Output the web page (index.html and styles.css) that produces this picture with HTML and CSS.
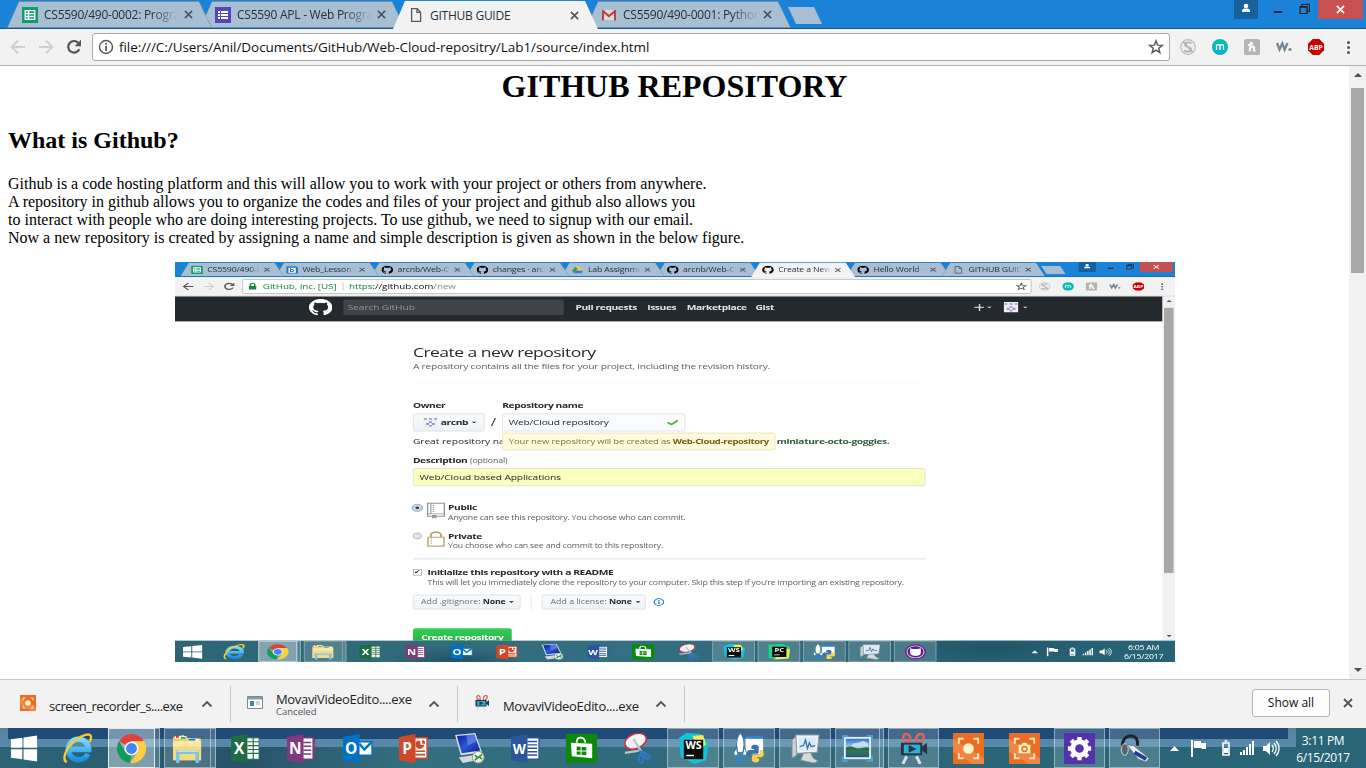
FILE: index.html
```
<!DOCTYPE html>
<html lang="en">
<head>
<meta charset="utf-8">
<title>GITHUB GUIDE</title>
<link rel="stylesheet" href="styles.css">
</head>
<body>
<svg class="sprite" aria-hidden="true">
  <linearGradient id="g-sky" x1="0" y1="0" x2="0" y2="1"><stop offset="0" stop-color="#2f74c8"/><stop offset=".5" stop-color="#a9d4f0"/><stop offset=".6" stop-color="#3d7d45"/><stop offset="1" stop-color="#1f5a86"/></linearGradient>
  <linearGradient id="g-screen" x1="0" y1="0" x2="1" y2="1"><stop offset="0" stop-color="#0b1f9a"/><stop offset=".5" stop-color="#2f56d8"/><stop offset="1" stop-color="#0a1a80"/></linearGradient>
  <linearGradient id="g-m" x1="0" y1="0" x2="0" y2="1"><stop offset="0" stop-color="#00c4a0"/><stop offset="1" stop-color="#0aaed0"/></linearGradient>
  <linearGradient id="g-ie" x1="0" y1="0" x2="0" y2="1"><stop offset="0" stop-color="#7fdcff"/><stop offset="1" stop-color="#1a8fe0"/></linearGradient>
  <symbol id="sheet" viewBox="0 0 16 16"><path fill="#0f9d6c" d="M0 0h16v16H0z"/><path fill="none" stroke="#fff" stroke-width="1.3" d="M3.2 3.6h9.6v8.8H3.2zM3.2 6.6h9.6M3.2 9.5h9.6M6.5 3.6v8.8"/></symbol>
  <symbol id="form" viewBox="0 0 16 16"><path fill="#5546bd" d="M0 0h16v16H0z"/><path fill="#fff" d="M3 4h2v2H3zm3 0h7v2H6zM3 7h2v2H3zm3 0h7v2H6zM3 10h2v2H3zm3 0h7v2H6z"/></symbol>
  <symbol id="doc" viewBox="0 0 16 16"><path fill="none" stroke="#5a5a5a" stroke-width="1.3" d="M3.6 1.6h5.6l3.4 3.6v9.2h-9zM9 1.8v3.6h3.4"/></symbol>
  <symbol id="gmail" viewBox="0 0 16 16"><path fill="#d9dde2" d="M2 3h12v10H2z"/><path fill="#c33f3f" d="M1 3h1.500L8 7.700 13.500 3H15v10.500h-2V6.300L8 10.500 3 6.300v7.200H1z"/></symbol>
  <symbol id="bing" viewBox="0 0 16 16"><path fill="#2778bd" d="M0 1h13l3 3v11H0z"/><path fill="#fff" d="M3 4h10v9.500H3z"/><path fill="none" stroke="#2778bd" stroke-width="1.500" d="M5.800 4.500V12M5.800 8.200c1.500-1.500 4.400-1 4.400 1.300s-2.900 2.800-4.400 1.300"/></symbol>
  <symbol id="drive" viewBox="0 0 16 16"><path fill="#2ea35c" d="M5.300 1.500 8 6 3 14.500.3 10z"/><path fill="#f5c73d" d="M5.300 1.500h5.400l5 8.500h-5.400z"/><path fill="#3f79d6" d="M5.600 10h10.100L13 14.500H3z"/></symbol>
  <symbol id="octo" viewBox="0 0 16 16"><path d="M8 0C3.580 0 0 3.580 0 8c0 3.540 2.290 6.530 5.470 7.590.4.070.55-.17.55-.38 0-.19-.01-.82-.01-1.490-2.010.370-2.530-.49-2.690-.94-.09-.23-.48-.94-.82-1.130-.28-.15-.68-.52-.01-.53.630-.01 1.080.580 1.230.820.720 1.210 1.870.870 2.330.660.070-.52.280-.87.510-1.070-1.780-.2-3.640-.89-3.640-3.950 0-.87.310-1.590.820-2.150-.08-.2-.36-1.020.080-2.120 0 0 .67-.21 2.200.820.640-.18 1.320-.27 2-.27s1.360.090 2 .270c1.530-1.040 2.200-.82 2.200-.82.440 1.100.160 1.920.080 2.120.510.560.820 1.270.820 2.150 0 3.070-1.870 3.750-3.650 3.950.290.250.540.730.540 1.480 0 1.070-.01 1.930-.01 2.200 0 .210.150.460.550.380A8.010 8.010 0 0 0 16 8c0-4.420-3.580-8-8-8z"/></symbol>
  <symbol id="x" viewBox="0 0 10 10"><path fill="none" stroke="currentColor" stroke-width="1.800" d="m1 1 8 8m0-8-8 8"/></symbol>
  <symbol id="back" viewBox="0 0 16 16"><path fill="none" stroke="currentColor" stroke-width="1.900" d="M15 8H2M8.200 1.500 1.700 8l6.500 6.500"/></symbol>
  <symbol id="fwd" viewBox="0 0 16 16"><path fill="none" stroke="currentColor" stroke-width="1.900" d="M1 8h13M7.800 1.500 14.300 8l-6.500 6.500"/></symbol>
  <symbol id="reload" viewBox="0 0 16 16"><path fill="none" stroke="#555" stroke-width="2.200" d="M13.300 10.200A5.800 5.800 0 1 1 12.400 4"/><path fill="#555" d="M15 .8v6.400H8.600z"/></symbol>
  <symbol id="info" viewBox="0 0 16 16"><circle cx="8" cy="8" r="6.500" fill="none" stroke="currentColor" stroke-width="1.400"/><path fill="currentColor" d="M7.200 4h1.700v1.700H7.200zm0 2.900h1.700v5H7.200z"/></symbol>
  <symbol id="lock" viewBox="0 0 16 16"><path fill="#128a3e" d="M3 7h10v7H3z"/><path fill="none" stroke="#128a3e" stroke-width="2" d="M5 7V5a3 3 0 0 1 6 0v2"/></symbol>
  <symbol id="star" viewBox="0 0 16 16"><path fill="none" stroke="#555" stroke-width="1.400" d="m8 1.800 1.600 4.300 4.800.2-3.700 2.900 1.200 4.500L8 11.200l-3.900 2.500 1.200-4.500-3.700-2.900 4.800-.2z"/></symbol>
  <symbol id="e1" viewBox="0 0 16 16"><circle cx="8" cy="8" r="7.300" fill="#eee" stroke="#bcbcbc" stroke-width="1.200"/><path fill="none" stroke="#b4b4b4" stroke-width="1.800" d="M11.500 4.500C9 2.500 4.500 3.500 5 6s6.500 2 6 4.500-5 2.500-7 1M3.500 3l9.500 10.500"/></symbol>
  <symbol id="e2" viewBox="0 0 16 16"><circle cx="8" cy="8" r="8" fill="url(#g-m)"/><path fill="none" stroke="#fff" stroke-width="1.300" d="M4.500 11V5.500M4.500 7c.5-1.800 3.500-1.800 3.500 0v4m0-4c.5-1.800 3.500-1.800 3.500 0v4"/></symbol>
  <symbol id="e3" viewBox="0 0 16 16"><rect width="16" height="16" rx="2" fill="#b5b5b5"/><path fill="none" stroke="#fff" stroke-width="2" d="M7 2.800 5.600 12.500M4 6l5-1.500M6.300 9c2-2.500 4.300-1.800 3.700.5-.4 1.600-.2 3 1.500 2"/></symbol>
  <symbol id="e4" viewBox="0 0 16 16"><path fill="none" stroke="#768992" stroke-width="2.400" d="m1 4 2.500 6.500L6.300 4.500l2.300 6L11.500 4"/><circle cx="14" cy="10.500" r="1.600" fill="#768992"/></symbol>
  <symbol id="e5" viewBox="0 0 16 16"><path fill="#c80000" d="M4.700 0h6.600L16 4.700v6.600L11.300 16H4.700L0 11.300V4.700z"/><text x="8" y="10.700" font-size="7" font-weight="700" text-anchor="middle" fill="#fff" textLength="13.500" lengthAdjust="spacingAndGlyphs">ABP</text></symbol>
  <symbol id="user" viewBox="0 0 24 19"><path fill="#15609d" d="M0 0h24v19H0z"/><circle cx="12" cy="6" r="2.300" fill="#fff"/><path fill="#fff" d="M8 12V10.800C8 9 10 8.600 12 8.600s4 .4 4 2.200V12z"/></symbol>
  <symbol id="restore" viewBox="0 0 12 12"><path fill="none" stroke="#222" stroke-width="1.200" d="M1 3.500h7v7H1zM1 4.200h7M3 3V1.300h7.300v7H8.500"/></symbol>
  <symbol id="down" viewBox="0 0 8 4"><path fill="currentColor" d="M0 0h8L4 4z"/></symbol>
  <symbol id="up" viewBox="0 0 8 4"><path fill="currentColor" d="M0 4h8L4 0z"/></symbol>
  <symbol id="chev" viewBox="0 0 12 8"><path fill="none" stroke="#555" stroke-width="1.800" d="m1.500 6.500 4.500-4.500 4.500 4.500"/></symbol>
  <symbol id="ident" viewBox="0 0 20 20"><path fill="#f0f0f0" d="M0 0h20v20H0z"/><path fill="#9d8fe0" d="M1 2h4v3H1zm7 0h4v3H8zm7 0h4v3h-4zM8 8h4v3H8zM4 11h4v4H4zm8 0h4v4h-4zM8 15h4v3H8z"/></symbol>

  <symbol id="win" viewBox="0 0 32 32"><path fill="#fff" d="M2 6.500 13.700 4.800v10.500H2zM15 4.600 29 2.500v12.800H15zM2 16.700h11.700v10.500L2 25.500zM15 16.700h14v12.800l-14-2.100z"/></symbol>
  <symbol id="ie" viewBox="0 0 32 32"><path fill="none" stroke="url(#g-ie)" stroke-width="5.600" d="M26.500 21.500c-1.500 4-5 6-9 6a10.500 10.500 0 1 1 10-10.500H9"/><path fill="none" stroke="#f8c92c" stroke-width="2.400" d="M5 30C-.5 28 4 15 13 8 21 2 29-.5 30 3.500c.2 2-.6 4-1.600 6"/></symbol>
  <symbol id="chrome" viewBox="0 0 32 32"><path fill="#db4437" d="M16 16 3.200 8.500A15 15 0 0 1 29 8.500H16z"/><path fill="#0f9d58" d="M3.200 8.300 9.600 19.500 16 23l-2 8A15 15 0 0 1 3.200 8.300z"/><path fill="#ffcd40" d="M16 8.600h13A15 15 0 0 1 14.500 31l8-11.300z"/><circle cx="16" cy="16" r="7.300" fill="#f4f4f4"/><circle cx="16" cy="16" r="5.600" fill="#4285f4"/></symbol>
  <symbol id="folder" viewBox="0 0 32 32"><path fill="#e7c86a" d="M1 4 12 2l3 3 15 1v22H1z"/><path fill="#fff" d="M3 3h12v3H3zm13 3h12v2H16z"/><path fill="#e03030" d="M4 3h3v2H4z"/><path fill="#40a040" d="M9 4h5v2H9z"/><path fill="#3070c0" d="M17 6h7v2h-7z"/><path fill="#fae9a5" d="M1 8h29v20H1z"/><path fill="#f4da83" d="M1 14h29v14H1z"/><path fill="none" stroke="#7cc3e8" stroke-width="3.500" d="M6 31V20h20v11"/><path stroke="#c5e8f8" d="M5 19h22"/></symbol>
  <symbol id="excel" viewBox="0 0 32 32"><path fill="#fff" stroke="#217346" d="M17 5h13v22H17z"/><path stroke="#217346" stroke-width="1.200" d="M18 9h12M18 13h12M18 17h12M18 21h12M24 5v22" fill="none"/><path fill="#1e6e42" d="M1 4 18 1v30L1 28z"/><text class="ms" x="9.500" y="22" text-anchor="middle">X</text></symbol>
  <symbol id="onenote" viewBox="0 0 32 32"><path fill="#fff" stroke="#80397b" stroke-width="1.500" d="M17 5h11v22H17z"/><path fill="#80397b" d="M28 6h2v5h-2zm0 6h2v5h-2zm0 6h2v5h-2zM18 9h8v1.500h-8zm0 4h8v1.500h-8zm0 4h8v1.500h-8zm0 4h8v1.500h-8z"/><path fill="#80397b" d="M1 4 18 1v30L1 28z"/><text class="ms" x="9.500" y="22" text-anchor="middle">N</text></symbol>
  <symbol id="outlook" viewBox="0 0 32 32"><path fill="#fff" stroke="#0072c6" stroke-width="1.500" d="M17 9h14v14H17z"/><path fill="none" stroke="#0072c6" stroke-width="2.500" d="m18 11 5 6 7-7"/><path fill="#0072c6" d="M1 4 18 1v30L1 28z"/><text class="ms" x="9.500" y="22" text-anchor="middle">O</text></symbol>
  <symbol id="ppt" viewBox="0 0 32 32"><path fill="#fff" stroke="#d24726" stroke-width="1.500" d="M17 5h13v21H17z"/><path fill="#d24726" d="M20 8h3v4h4a4.500 4.500 0 1 1-7-4zm5-1a4 4 0 0 1 3 4h-3zM18 18h10v1.700H18zm0 3.500h10v1.700H18z"/><path fill="#d24726" d="M1 4 18 1v30L1 28z"/><text class="ms" x="9.500" y="22" text-anchor="middle">P</text></symbol>
  <symbol id="word" viewBox="0 0 32 32"><path fill="#fff" stroke="#2b579a" stroke-width="1.500" d="M17 5h13v22H17z"/><path fill="#2b579a" d="M18 8h10v1.500H18zm0 3.500h10V13H18zm0 3.500h10v1.500H18zm0 3.500h10V20H18zm0 3.500h10v1.500H18z"/><path fill="#2b579a" d="M1 4 18 1v30L1 28z"/><text class="ms ms-w" x="9.500" y="21.500" text-anchor="middle">W</text></symbol>
  <symbol id="rdp" viewBox="0 0 32 32"><path fill="#d7dce5" d="m1 2 21-2 7 20-22 3z"/><path fill="url(#g-screen)" d="m3 3 18-1.500L27 18 8 21z"/><path fill="#6f93ee" d="m13 2.300 8-.8 2.500 7L14 13z" opacity=".6"/><path fill="#d3d8dc" d="m5 25 15-2 4 5-15 3z"/><circle cx="25" cy="25" r="6" fill="#eef1ec" stroke="#8a9a8a"/><path fill="none" stroke="#2c9a3c" stroke-width="1.800" d="m21.500 23 3 2.500-3 2.500m7.500-6-3 2.500 3 2.500"/></symbol>
  <symbol id="store" viewBox="0 0 32 32"><path fill="#0a8a0a" d="M0 1h32v30H0z"/><path fill="#fff" d="m5 10 22 1v15L6 24z"/><path fill="none" stroke="#fff" stroke-width="1.800" d="M11 10c0-7 8-7 9 0"/><path fill="#0a8a0a" d="m11 14 4 .3V18h-4zm5 .4 5 .3V18h-5zM11 19h4v3.500l-4-.4zm5 0h5v4l-5-.5z"/></symbol>
  <symbol id="snip" viewBox="0 0 32 32"><ellipse cx="14" cy="8.500" rx="11.500" ry="7.500" fill="#f4f4f6" stroke="#d23131" stroke-width="1.600" transform="rotate(-22 14 8.500)"/><path fill="none" stroke="#b9c6d0" stroke-width="2.400" d="m3 20.500 17-2.500M12 6l9 15"/><path fill="none" stroke="#2c78c0" stroke-width="2.300" d="m18 18 2 4c-4 2-3 9 0 8.500s3-5.500 0-8.500m0-3.500c3 2.500 9 3.500 9 7s-5 2-6-4.500z"/></symbol>
  <symbol id="ws" viewBox="0 0 32 32"><path fill="#12c3dc" d="m1 5 8-5 14 1 9 9-3 18-12 4L3 25z"/><path fill="#f6ec47" d="m15 3 11-1 3 10-9 5z"/><path fill="#0a0a0a" d="M6 7h20v20H6z"/><text class="jb" x="16" y="17" text-anchor="middle">WS</text><path fill="#fff" d="M8.500 22.500h8V24h-8z"/></symbol>
  <symbol id="pycharm" viewBox="0 0 32 32"><path fill="#22d18b" d="m1 2 18-2 12 6-1 22-16 3L1 28z"/><path fill="#f6ec47" d="m20 10 11 1-2 18-20 2z"/><path fill="#0a0a0a" d="M6 6h20v20H6z"/><text class="jb" x="16" y="16" text-anchor="middle">PC</text><path fill="#fff" d="M8.500 21.500h8V23h-8z"/></symbol>
  <symbol id="rocket" viewBox="0 0 32 32"><path fill="#fff" d="M12 5h18v17H12z"/><path fill="#2b83d8" d="M12 3h18v3H12z"/><path fill="#fff" stroke="#3c7c9c" d="M6.500 0c5 6 4 14 3 20H3.500C2 13 2 6 6.500 0zM3 14l-3 6v3h4zm7 0 3 6v3h-4z"/><path stroke="#2b83d8" stroke-width="1.500" d="M3.500 23v7m3-8v10m3-9v7"/><path fill="#3b74a8" d="M18 14c0-2.500 7-2.500 7.500 0v5c0 2-1 2.500-3 2.500h-3c-1.500 0-2 1-2 3h-2c-3-.5-3-6.500 0-7h5v-1h-2.500z"/><path fill="#fbd24a" d="M26.500 17.500h2c3 .5 3 7 0 7.500h-5v1H26v2.500c0 2.500-7.500 2.500-7.500 0V25c0-1.500 1-2.500 2.500-2.500h3c2 0 2.500-1 2.500-2.500z"/></symbol>
  <symbol id="monitor" viewBox="0 0 32 32"><path fill="#c9d0d4" stroke="#7b8589" d="M2 7 7 3v20l-5 3z"/><path fill="#eef2f4" stroke="#8c989e" d="M6 2h24l-2 18-21 1z"/><path fill="#dbe9f3" d="M9 5h18l-1.500 12.500L9 18z"/><path fill="none" stroke="#2d6fb0" stroke-width="1.300" d="M10 14l4-1 2-6 2 9 2-6 2 4 4-1"/><path fill="#d5dade" stroke="#8c989e" d="m14 21 7-1 3 6 5 3-4 2-14-3z"/></symbol>
  <symbol id="photo" viewBox="0 0 32 32"><path fill="#dcecf6" d="M2 4h28v23H2z"/><path fill="url(#g-sky)" d="M4 6h24v19H4z"/><path fill="#e8f4fb" opacity=".7" d="M10 12c4-3 6-1 9-3s6 0 8 2v3H10z"/><path fill="#2b6c47" d="M4 15c6-3 9 1 13 1s7-2 11-1v3H4z"/><path fill="none" stroke="#4e9ddf" stroke-width="2" d="M1 8V3h5m20 0h5v5M1 24v5h5m20 0h5v-5"/></symbol>
  <symbol id="movie" viewBox="0 0 32 32"><path fill="none" stroke="#e0635c" stroke-width="2.600" d="M11 10C3 8 5 0 9 1s4 4 3 9m7 0c-1-5 0-8 4-9s6 6-2 9"/><path fill="#263445" d="M3 10h22v13H3zm22 4 5-4v12l-5-4z"/><path fill="#28b1d3" d="M6 12h17v9H6z"/><path fill="#263445" d="m11 12.500 8 4-8 4z"/><path stroke="#d9e2e8" stroke-width="3" d="m9 24-4 8m14-8 4 8"/></symbol>
  <symbol id="rec" viewBox="0 0 32 32"><path fill="#ed6c23" d="M0 0h32v32H0z"/><path fill="#f18643" d="m0 6 32 20v6H20L0 19z"/><circle cx="16" cy="16" r="5.500" fill="#fdf6c9"/><path fill="none" stroke="#ffe7bd" stroke-width="2" d="M6 11V6h5m10 0h5v5M6 21v5h5m10 0h5v-5"/></symbol>
  <symbol id="cam" viewBox="0 0 32 32"><path fill="#ed6c23" d="M0 0h32v32H0z"/><path fill="#f18643" d="m0 6 32 20v6H20L0 19z"/><path fill="#fdf6c9" d="M10 12h3l1-2h4l1 2h3v9H10z"/><circle cx="16" cy="16.500" r="2.600" fill="none" stroke="#ed6c23" stroke-width="1.500"/><path fill="none" stroke="#ffe7bd" stroke-width="2" d="M6 11V6h5m10 0h5v5M6 21v5h5m10 0h5v-5"/></symbol>
  <symbol id="gear" viewBox="0 0 32 32"><path fill="#5432ab" d="M0 0h32v32H0z"/><circle cx="16" cy="16" r="7" fill="none" stroke="#fff" stroke-width="5"/><path stroke="#fff" stroke-width="4.500" d="M16 4v4m0 16v4M4 16h4m16 0h4M7.500 7.500l3 3m11 11 3 3m0-17-3 3m-11 11-3 3"/></symbol>
  <symbol id="head" viewBox="0 0 32 32"><path fill="none" stroke="#1d2226" stroke-width="3" d="M5 18C1 10 6 3 12 3s8 5 7 10"/><ellipse cx="6" cy="17" rx="3.500" ry="6" fill="#5a6267" stroke="#d3dade"/><path fill="#e9eef2" stroke="#6e7a84" d="m8 12 7 1 16 13-3 4-8-3z"/><path stroke="#1b3f96" stroke-width="4" d="m16 20 12 7"/></symbol>
  <symbol id="ghd" viewBox="0 0 32 32"><circle cx="16" cy="16" r="15" fill="#6a2d91"/><circle cx="16" cy="16" r="12" fill="#5a2382" stroke="#d9c6e8" stroke-width="1.500"/><path fill="#fff" d="M8.500 9l4 1.500h7l4-1.500v9c0 5-4 6-7.500 6s-7.500-1-7.500-6z"/></symbol>
  <symbol id="tray" viewBox="0 0 110 20"><path fill="#fff" d="M0 13h9L4.500 8zM21 2h2v17h-2zM24 3h7v7h-7zM31 5h5v6h-4l-2-2z"/><path fill="none" stroke="#fff" stroke-width="1.600" d="M53 5h6v12h-6zM54.500 3h3"/><path fill="#fff" d="M54 10h4v5h-4zM70 14h2v3h-2zm3-2h2v5h-2zm3-3h2v8h-2zm3-3h2v11h-2zm3-3h2v14h-2zM93 8h3l4-4v13l-4-4h-3z"/><path fill="none" stroke="#fff" stroke-width="1.300" d="M102 7c1.500 2 1.500 5 0 7m2-9c3 3 3 8 0 11m2-13c4 4 4 11 0 15"/></symbol>
</svg>

<div class="screen">
  <div class="titlebar">
    <div class="tabs">
      <div class="tab"><svg><use href="#sheet"/></svg><span>CS5590/490-0002: Program</span><svg class="tx"><use href="#x"/></svg></div>
      <div class="tab"><svg><use href="#form"/></svg><span>CS5590 APL - Web Progra</span><svg class="tx"><use href="#x"/></svg></div>
      <div class="tab active"><svg><use href="#doc"/></svg><span>GITHUB GUIDE</span><svg class="tx"><use href="#x"/></svg></div>
      <div class="tab"><svg><use href="#gmail"/></svg><span>CS5590/490-0001: Python</span><svg class="tx"><use href="#x"/></svg></div>
    </div>
    <i class="newtab"></i>
    <div class="wctl"><svg class="usr"><use href="#user"/></svg><i class="min"></i><svg class="rst"><use href="#restore"/></svg><b class="cls"><svg><use href="#x"/></svg></b></div>
  </div>
  <div class="toolbar">
    <svg class="nav"><use href="#back"/></svg><svg class="nav"><use href="#fwd"/></svg><svg class="nav"><use href="#reload"/></svg>
    <div class="omni"><svg><use href="#info"/></svg><span class="url">file:///C:/Users/Anil/Documents/GitHub/Web-Cloud-repositry/Lab1/source/index.html</span><svg class="fav"><use href="#star"/></svg></div>
    <div class="exts"><svg><use href="#e1"/></svg><svg><use href="#e2"/></svg><svg><use href="#e3"/></svg><svg><use href="#e4"/></svg><svg><use href="#e5"/></svg></div>
    <div class="dots"><i></i><i></i><i></i></div>
  </div>

  <div class="view">
    <main class="page">
      <h1>GITHUB REPOSITORY</h1>
      <h2>What is Github?</h2>
      <p>Github is a code hosting platform and this will allow you to work with your project or others from anywhere.<br>A repository in github allows you to organize the codes and files of your project and github also allows you<br>to interact with people who are doing interesting projects. To use github, we need to signup with our email.<br>Now a new repository is created by assigning a name and simple description is given as shown in the below figure.</p>
      <div class="figure">
        <div class="stage">
          <div class="titlebar">
            <div class="tabs narrow">
              <div class="tab"><svg><use href="#sheet"/></svg><span>CS5590/490-0</span><svg class="tx"><use href="#x"/></svg></div>
              <div class="tab"><svg><use href="#bing"/></svg><span>Web_Lesson1</span><svg class="tx"><use href="#x"/></svg></div>
              <div class="tab"><svg><use href="#octo"/></svg><span>arcnb/Web-Cl</span><svg class="tx"><use href="#x"/></svg></div>
              <div class="tab"><svg><use href="#octo"/></svg><span>changes · arcn</span><svg class="tx"><use href="#x"/></svg></div>
              <div class="tab"><svg><use href="#drive"/></svg><span>Lab Assignme</span><svg class="tx"><use href="#x"/></svg></div>
              <div class="tab"><svg><use href="#octo"/></svg><span>arcnb/Web-Cl</span><svg class="tx"><use href="#x"/></svg></div>
              <div class="tab active"><svg><use href="#octo"/></svg><span>Create a New</span><svg class="tx"><use href="#x"/></svg></div>
              <div class="tab"><svg><use href="#octo"/></svg><span>Hello World ·</span><svg class="tx"><use href="#x"/></svg></div>
              <div class="tab"><svg><use href="#doc"/></svg><span>GITHUB GUIDE</span><svg class="tx"><use href="#x"/></svg></div>
            </div>
            <i class="newtab"></i>
            <div class="wctl"><svg class="usr"><use href="#user"/></svg><i class="min"></i><svg class="rst"><use href="#restore"/></svg><b class="cls"><svg><use href="#x"/></svg></b></div>
          </div>
          <div class="toolbar">
            <svg class="nav on"><use href="#back"/></svg><svg class="nav"><use href="#fwd"/></svg><svg class="nav"><use href="#reload"/></svg>
            <div class="omni"><svg><use href="#lock"/></svg><span class="org">GitHub, Inc. [US]</span><span class="url"><em>https</em>://github.com<s>/new</s></span><svg class="fav"><use href="#star"/></svg></div>
            <div class="exts"><svg><use href="#e1"/></svg><svg><use href="#e2"/></svg><svg><use href="#e3"/></svg><svg><use href="#e4"/></svg><svg><use href="#e5"/></svg></div>
            <div class="dots"><i></i><i></i><i></i></div>
          </div>
          <div class="gh">
            <div class="gh-body">
              <div class="gh-head">
                <svg class="mark"><use href="#octo"/></svg><span class="search">Search GitHub</span>
                <b class="n1">Pull requests</b><b class="n2">Issues</b><b class="n3">Marketplace</b><b>Gist</b>
                <span class="acct"><i class="plus"></i><svg class="car"><use href="#down"/></svg><svg class="ava"><use href="#ident"/></svg><svg class="car"><use href="#down"/></svg></span>
              </div>
              <div class="form">
                <div class="f-title">Create a new repository</div>
                <div class="f-sub">A repository contains all the files for your project, including the revision history.</div>
                <div class="f-row labels"><b>Owner</b><b>Repository name</b></div>
                <div class="f-row inputs"><span class="btn own"><svg><use href="#ident"/></svg><b>arcnb</b><svg class="car"><use href="#down"/></svg></span><span class="slash">/</span><span class="field name">Web/Cloud repository<svg viewBox="0 0 16 12"><path fill="none" stroke="#55ae3c" stroke-width="3" d="m1 6 5 4 9-8"/></svg></span></div>
                <div class="great"><span>Great repository nar</span><div class="tip">Your new repository will be created as <b>Web-Cloud-repository</b></div><b>miniature-octo-goggles.</b></div>
                <div class="desc"><b>Description</b> <small>(optional)</small></div>
                <div class="field yellow">Web/Cloud based Applications</div>
                <div class="opt pub"><i class="radio sel"></i><svg class="oi" viewBox="0 0 25 31" preserveAspectRatio="none"><path fill="#fff" stroke="#8d979e" stroke-width="2" d="M1 1h23v25H1z"/><path stroke="#8d979e" stroke-width="1.500" d="M5.500 1v20M1 21.500h23" fill="none"/><path stroke="#8d979e" stroke-width="2" stroke-dasharray="2 2" d="M9 4v14"/><path fill="#8d979e" d="M7 24h6v7l-3-2-3 2z"/></svg><div><b>Public</b><span>Anyone can see this repository. You choose who can commit.</span></div></div>
                <div class="opt prv"><i class="radio"></i><svg class="oi" viewBox="0 0 25 31" preserveAspectRatio="none"><path fill="none" stroke="#b9a777" stroke-width="3" d="M5.500 13V9c0-9 14-9 14 0v4"/><path fill="#fff" stroke="#b9a777" stroke-width="2" d="M1.500 12.500h22v17h-22z"/><path stroke="#b9a777" stroke-width="2" stroke-dasharray="2 2" d="M6 15v12"/></svg><div><b>Private</b><span>You choose who can see and commit to this repository.</span></div></div>
                <div class="opt init"><i class="check">✔</i><div><b>Initialize this repository with a README</b><span>This will let you immediately clone the repository to your computer. Skip this step if you’re importing an existing repository.</span></div></div>
                <div class="f-row picks"><span class="btn p1">Add .gitignore: <b>None</b><svg class="car"><use href="#down"/></svg></span><i class="vr"></i><span class="btn p2">Add a license: <b>None</b><svg class="car"><use href="#down"/></svg></span><svg class="inf"><use href="#info"/></svg></div>
                <div class="create">Create repository</div>
              </div>
            </div>
            <div class="sbar"><svg><use href="#up"/></svg><i></i><svg><use href="#down"/></svg></div>
          </div>
          <div class="taskbar inner">
            <span class="start"><svg><use href="#win"/></svg></span>
            <span><svg><use href="#ie"/></svg></span><span class="open lit stack"><svg><use href="#chrome"/></svg></span><span class="open stack"><svg><use href="#folder"/></svg></span><span><svg><use href="#excel"/></svg></span><span><svg><use href="#onenote"/></svg></span><span><svg><use href="#outlook"/></svg></span><span><svg><use href="#ppt"/></svg></span><span><svg><use href="#rdp"/></svg></span><span><svg><use href="#word"/></svg></span><span><svg><use href="#store"/></svg></span><span><svg><use href="#snip"/></svg></span><span class="open"><svg><use href="#ws"/></svg></span><span class="open"><svg><use href="#pycharm"/></svg></span><span class="open"><svg><use href="#rocket"/></svg></span><span class="open"><svg><use href="#monitor"/></svg></span><span class="open"><svg><use href="#ghd"/></svg></span>
            <svg class="tray"><use href="#tray"/></svg>
            <div class="clock">6:05 AM<br>6/15/2017</div>
          </div>
        </div>
      </div>
    </main>
    <div class="sbar"><svg><use href="#up"/></svg><i></i><svg><use href="#down"/></svg></div>
  </div>

  <div class="shelf">
    <div class="dl"><svg><use href="#rec"/></svg><div class="fn">screen_recorder_s....exe</div><svg class="cv"><use href="#chev"/></svg></div>
    <div class="dl two"><svg viewBox="0 0 16 16"><path fill="#fff" stroke="#7c8a90" d="M.5 1.500h15v12H.5z"/><path fill="#8e9ca4" d="M1 2h14v2.500H1z"/><path fill="#3d88a8" d="M3 6h4v5H3z"/><path stroke="#9ab" d="M9 7h4M9 9h4"/></svg><div class="fn">MovaviVideoEdito....exe<small>Canceled</small></div><svg class="cv"><use href="#chev"/></svg></div>
    <div class="dl"><svg><use href="#movie"/></svg><div class="fn">MovaviVideoEdito....exe</div><svg class="cv"><use href="#chev"/></svg></div>
    <div class="showall">Show all</div>
    <svg class="sx"><use href="#x"/></svg>
  </div>

  <div class="taskbar outer">
    <span class="start"><svg><use href="#win"/></svg></span>
    <span><svg><use href="#ie"/></svg></span><span class="open lit stack"><svg><use href="#chrome"/></svg></span><span class="open stack"><svg><use href="#folder"/></svg></span><span><svg><use href="#excel"/></svg></span><span><svg><use href="#onenote"/></svg></span><span><svg><use href="#outlook"/></svg></span><span><svg><use href="#ppt"/></svg></span><span><svg><use href="#rdp"/></svg></span><span><svg><use href="#word"/></svg></span><span><svg><use href="#store"/></svg></span><span><svg><use href="#snip"/></svg></span><span class="open"><svg><use href="#ws"/></svg></span><span class="open"><svg><use href="#rocket"/></svg></span><span class="open"><svg><use href="#monitor"/></svg></span><span class="open stack cut"><svg><use href="#photo"/></svg></span><span class="open s"><svg><use href="#movie"/></svg></span><span class="s"><svg><use href="#rec"/></svg></span><span class="s"><svg><use href="#cam"/></svg></span><span class="open s"><svg><use href="#gear"/></svg></span><span class="open s"><svg><use href="#head"/></svg></span>
    <svg class="tray"><use href="#tray"/></svg>
    <div class="clock">3:11 PM<br>6/15/2017</div>
  </div>
</div>
</body>
</html>
```
FILE: styles.css
```
* { box-sizing: border-box; }
body { margin: 0; overflow: hidden; font-family: "Open Sans", "Noto Sans", sans-serif; font-size: 12px; color: #222; }
.sprite { display: block; width: 0; height: 0; position: absolute; }
.screen, .stage { width: 1366px; height: 768px; display: flex; flex-direction: column; background: #fff; }
svg { flex: none; display: block; }
.ms { font: 700 16px "Open Sans", sans-serif; fill: #fff; }
.ms-w { font-size: 14px; }
.jb { font: 700 11px "Open Sans", sans-serif; fill: #fff; }

/* window title bar and tabs */
.titlebar { flex: none; height: 29px; background: #1a83d8; border-bottom: 1px solid #15588f; display: flex; padding-left: 7px; }
.active { --tab: #f2f2f2; }
.tabs { display: flex; height: 29px; isolation: isolate; }
.tab { position: relative; z-index: 1; isolation: isolate; width: 205px; height: 28px; margin-right: -12px; padding: 1px 19px 0 15px; display: flex; align-items: center; background: #7290ac; clip-path: polygon(12px 1px, calc(100% - 13px) 1px, 100% 100%, 0 100%); color: #25313c; }
.tab::before { content: ""; position: absolute; z-index: -1; inset: 0; background: var(--tab, #a8bed2); clip-path: polygon(12px 2px, calc(100% - 13px) 2px, calc(100% - 1px) calc(100% - 1px), 1px calc(100% - 1px)); }
.tab:nth-child(1) { z-index: 9; }
.tab:nth-child(2) { z-index: 8; }
.tab:nth-child(3) { z-index: 7; }
.tab:nth-child(4) { z-index: 6; }
.tab:nth-child(5) { z-index: 5; }
.tab:nth-child(6) { z-index: 4; }
.tab.active { z-index: 20; height: 29px; background: #f2f2f2; }
.tab svg { width: 16px; height: 16px; }
.tab span { flex: 1; margin: 0 5px 0 6px; width: 0; white-space: nowrap; overflow: hidden; letter-spacing: -.25px; mask-image: linear-gradient(90deg, #000 80%, transparent); }
.tab.active span { mask-image: none; }
.tab .tx { width: 9px; height: 9px; color: #4b5661; }
.narrow .tab { width: 142px; padding-right: 19px; }
.narrow .tab.active span { mask-image: linear-gradient(90deg, #000 80%, transparent); }
.newtab { width: 34px; height: 17px; margin: 7px 0 0 9px; background: #a8bed2; clip-path: polygon(0 0, 26px 0, 100% 100%, 8px 100%); }
.narrow + .newtab { margin-left: 6px; }
.wctl { margin-left: auto; display: flex; }
.usr { width: 24px; height: 19px; }
.min { width: 8px; height: 2px; background: #222; margin: 11px 17px 0 16px; }
.rst { width: 12px; height: 12px; margin: 3px 7px 0 0; }
.cls { width: 45px; height: 19px; margin-right: 3px; background: #c75050; color: #fff; display: grid; place-items: center; }
.cls svg { width: 9px; height: 9px; }

/* address bar */
.toolbar { flex: none; height: 37px; background: #f2f2f2; border-bottom: 1px solid #b1b1b1; display: flex; align-items: center; padding: 0 13px 0 10px; }
.nav { width: 16px; height: 16px; margin-right: 12px; color: #d0d0d0; }
.nav.on { color: #555; }
.omni { width: 1078px; height: 28px; margin-left: -2px; border: 1px solid #a9a9a9; border-radius: 3px; background: #fff; display: flex; align-items: center; padding: 0 5px; }
.omni svg { width: 16px; height: 16px; color: #555; }
.url { flex: 1; margin-left: 5px; font-size: 13.500px; letter-spacing: -.06px; color: #111; white-space: nowrap; }
.org { margin-left: 6px; padding-right: 8px; border-right: 1px solid #bbb; line-height: 16px; font-size: 13.500px; letter-spacing: -.15px; color: #128a3e; }
.org + .url { margin-left: 8px; letter-spacing: -.1px; }
.url em { font-style: normal; color: #128a3e; }
.url s { text-decoration: none; color: #888; }
.exts { display: flex; gap: 16px; margin-left: 10px; }
.exts svg { width: 16px; height: 16px; }
.dots { margin-left: auto; display: grid; gap: 2px; padding-right: 3px; }
.dots i { width: 3px; height: 3px; border-radius: 50%; background: #555; }

/* page */
.view { flex: none; height: 613px; display: flex; }
.page { width: 1349px; padding: 0 8px; font: 16px/18px "Liberation Serif", "Times New Roman", serif; color: #000; overflow: hidden; }
.page h1 { margin: 2px 0 0; font-size: 32px; line-height: 37px; text-align: center; }
.page h2 { margin: 22px 0 21px; font-size: 24px; line-height: 27px; }
.page p { margin: 0 0 15px; font-size: 16px; }
.sbar { width: 17px; background: #f1f1f1; display: flex; flex-direction: column; align-items: center; color: #505050; padding: 7px 0 7px; }
.sbar svg { width: 8px; height: 4px; }
.sbar i { width: 13px; height: 185px; margin-top: 11px; margin-bottom: auto; background: #a8a8a8; }

/* embedded capture, drawn full size and squeezed */
.figure { width: 1000px; height: 400px; margin: 0 auto; overflow: hidden; font: 12px "Open Sans", sans-serif; }
.stage { transform: scale(.73206, .52083); transform-origin: 0 0; }
.gh { flex: none; height: 661px; display: flex; overflow: hidden; }
.gh .sbar i { height: 509px; }
.gh-body { width: 1349px; font-size: 14px; letter-spacing: -.2px; color: #24292e; white-space: nowrap; }
.gh-body b { font-weight: 700; letter-spacing: -.55px; }
.gh-head { height: 48px; background: #24292e; display: flex; align-items: center; color: #e4e6e8; padding: 0 0 6px 183px; }
.mark { width: 32px; height: 32px; fill: #fff; }
.search { width: 301px; height: 30px; margin: 0 16px 0 15px; border-radius: 3px; background: #404448; color: #8f9396; line-height: 29px; padding-left: 6px; }
.n1 { width: 98px; } .n2 { width: 54px; } .n3 { width: 94px; }
.acct { display: flex; align-items: center; margin-left: auto; padding-right: 184px; }
.plus { width: 13px; height: 13px; background: linear-gradient(#ddd, #ddd) center/100% 2px no-repeat, linear-gradient(#ddd, #ddd) center/2px 100% no-repeat; margin-right: 4px; }
.car { width: 7px; height: 4px; }
.ava { width: 20px; height: 20px; margin: 0 6px 0 16px; }
.form { width: 700px; margin-left: 325px; padding-top: 44px; line-height: 20px; }
.f-title { font-size: 24px; line-height: 30px; letter-spacing: -.78px; }
.f-sub { margin-top: 2px; height: 41px; letter-spacing: -.33px; color: #586069; border-bottom: 1px solid #f6f6f6; }
.f-row { display: flex; align-items: center; }
.labels { margin-top: 34px; height: 20px; }
.labels b:first-child { width: 122px; }
.inputs { margin-top: 6px; height: 34px; }
.btn { display: flex; align-items: center; border: 1px solid #ced1d5; border-radius: 3px; background: linear-gradient(#fafbfc, #eff3f6); color: #6a737d; }
.btn b { color: #24292e; }
.btn .car { margin-left: 5px; color: #24292e; }
.own { width: 98px; height: 34px; padding-left: 13px; }
.own svg:first-child { width: 20px; height: 20px; margin-right: 4px; }
.slash { width: 24px; text-align: center; font-size: 20px; }
.field { height: 34px; border: 1px solid #d1d5da; border-radius: 3px; padding: 0 8px; line-height: 32px; background: #fafbfc; }
.name { width: 250px; display: flex; justify-content: space-between; align-items: center; letter-spacing: -.33px; }
.name svg { width: 16px; height: 12px; }
.great { display: flex; align-items: center; margin-top: 2px; height: 34px; }
.great > span { width: 122px; overflow: hidden; letter-spacing: -.1px; }
.great > b { color: #2f5a3a; padding-left: 2px; letter-spacing: -.5px; }
.tip { width: 373px; height: 33px; border: 1px solid #dfd8a5; border-radius: 3px; background: #fffbdc; color: #857235; font-size: 13px; line-height: 31px; padding-left: 8px; letter-spacing: -.26px; }
.gh-body .tip b { color: #735c0f; letter-spacing: -.5px; }
.desc { margin-top: 9px; height: 26px; }
.desc small { font-size: 12px; color: #586069; }
.yellow { background: #faffbd; }
.opt { display: flex; height: 40px; }
.opt div { display: grid; grid-auto-rows: 20px; }
.opt span { font-size: 12px; letter-spacing: -.28px; color: #586069; }
.pub { margin-top: 16px; padding-top: 15px; height: 70px; border-top: 1px solid #f4f4f4; }
.prv { height: 38px; }
.radio { width: 12px; height: 12px; margin: 4px 7px 0 0; border-radius: 50%; border: 1px solid #999; background: #e6e6e6; }
.radio.sel { background: radial-gradient(#444 35%, #ddd 40%); box-shadow: 0 0 0 2px #9cc3f4; }
.oi { width: 25px; height: 31px; margin-right: 4px; }
.init { margin-top: 15px; padding-top: 15px; height: 57px; border-top: 2px solid #dfe2e5; }
.check { width: 12px; height: 12px; margin: 4px 8px 0 0; border: 1px solid #999; font: 11px/10px "DejaVu Sans", sans-serif; }
.picks { margin-top: 13px; height: 28px; font-size: 12px; letter-spacing: 0; }
.picks .btn { height: 28px; white-space: pre; }
.gh-body .picks b { letter-spacing: -.3px; }
.p1 { width: 147px; padding-left: 10px; }
.p2 { width: 142px; padding-left: 11px; }
.vr { width: 1px; height: 28px; background: #ddd; margin: 0 14px; }
.inf { width: 16px; height: 16px; margin-left: 10px; color: #0366d6; }
.create { width: 135px; height: 34px; margin-top: 36px; border-radius: 3px; background: linear-gradient(#34d058, #28a745); color: #fff; font-weight: 700; letter-spacing: -.6px; text-align: center; line-height: 34px; }

/* downloads shelf */
.shelf { flex: none; height: 49px; background: #f2f2f2; border-top: 1px solid #c6c6c6; display: flex; align-items: center; }
.dl { width: 227px; height: 36px; display: flex; align-items: center; border-right: 1px solid #c4c4c4; padding-left: 16px; }
.dl:first-child { width: 231px; padding-left: 20px; }
.dl svg { width: 16px; height: 16px; margin-top: -2px; }
.fn { width: 146px; margin-left: 13px; padding-top: 3px; font-size: 13px; line-height: 16px; letter-spacing: -.32px; white-space: nowrap; }
.dl:first-child .fn { letter-spacing: -.5px; }
.two .fn { padding: 0; line-height: 14px; margin-top: 2px; }
.fn small { display: block; font-size: 9.500px; line-height: 12px; letter-spacing: 0; color: #555; }
.dl .cv { width: 12px; height: 8px; margin: -1px 0 0 6px; }
.showall { width: 78px; height: 28px; margin: -2px 0 0 auto; border: 1px solid #b5b5b5; border-radius: 3px; background: #fdfdfd; text-align: center; line-height: 26px; font-size: 12px; color: #111; }
.sx { width: 10px; height: 10px; margin: -2px 13px 0; color: #555; }

/* taskbar */
.taskbar { flex: none; position: relative; height: 41px; padding-top: 1px; display: flex; background: radial-gradient(ellipse 90px 24px at 28% 90%, #225263, transparent), radial-gradient(ellipse 120px 30px at 82% 30%, #215668, transparent), linear-gradient(90deg, #2d6575, #346f81 45%, #285e71 80%, #286378); }
.outer { height: 40px; padding-top: 0; background: linear-gradient(#204b76, #204b76) 8px 0/1280px 11px no-repeat, linear-gradient(#57839f, #5789ad) 0 0/1296px 19px no-repeat, linear-gradient(90deg, #2b6677, #28536a 18%, #33707f 30%, #2d6679 60%, #286577); }
.taskbar span { width: 56px; height: 40px; display: flex; align-items: center; justify-content: center; position: relative; }
.inner span { width: 62.100px; }
.taskbar .start { width: 50px; }
.taskbar span svg { width: 31px; height: 31px; }
.taskbar .open::before { content: ""; position: absolute; inset: 0 2px 0; border: 1px solid rgba(255,255,255,.42); background: rgba(190,215,220,.22); }
.taskbar .lit::before { background: rgba(230,240,245,.45); border-color: rgba(255,255,255,.8); }
.taskbar .stack::before { right: 7px; }
.taskbar .stack::after { content: ""; position: absolute; right: 2px; top: 0; bottom: 0; width: 4px; border: 1px solid rgba(255,255,255,.45); border-left: 0; background: rgba(190,215,220,.25); }
.open svg { position: relative; }
.stack svg { margin-right: 5px; }
.taskbar .cut { width: 53px; }
.taskbar .cut::before { right: 6px; }
.taskbar .s { width: 55.200px; }
.tray { width: 110px; height: 20px; margin: 10px 0 0 8px; }
.inner .tray { margin-left: 128px; }
.clock { position: relative; margin-left: auto; width: 86px; text-align: center; color: #fff; font-size: 12px; line-height: 17px; letter-spacing: -.35px; padding-top: 4px; }
```
